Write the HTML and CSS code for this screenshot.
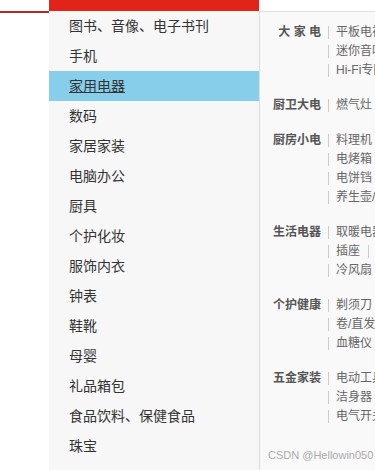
FILE: index.html
```html
<!DOCTYPE html>
<html>
  <head>
    <meta charset="utf-8" />
    <meta name="viewport" content="width=device-width,initial-scale=1.0" />
    <title>商品分类</title>
    <link rel="stylesheet" href="styles.css">
  </head>
  <body>
    <div id="page">
      <div class="bar">
        <div class="bar-gap"></div>
        <div class="bar-title"></div>
      </div>
      <div id="main">
        <div class="gutter"></div>
        <ul id="cats">
          <li>图书、音像、电子书刊</li>
          <li>手机</li>
          <li class="on"><a href="#">家用电器</a></li>
          <li>数码</li>
          <li>家居家装</li>
          <li>电脑办公</li>
          <li>厨具</li>
          <li>个护化妆</li>
          <li>服饰内衣</li>
          <li>钟表</li>
          <li>鞋靴</li>
          <li>母婴</li>
          <li>礼品箱包</li>
          <li>食品饮料、保健食品</li>
          <li>珠宝</li>
        </ul>
        <div id="panel">
          <dl class="group">
            <dt>大 家 电</dt>
            <dd>
              <div class="row"><span>平板电视</span><span>空调</span><span>冰箱</span><span>洗衣机</span></div>
              <div class="row"><span>迷你音响</span><span>烟机/灶具</span><span>热水器</span></div>
              <div class="row"><span>Hi-Fi专区</span><span>家庭影院</span></div>
            </dd>
          </dl>
          <dl class="group">
            <dt>厨卫大电</dt>
            <dd>
              <div class="row"><span>燃气灶</span><span>油烟机</span><span>消毒柜</span></div>
            </dd>
          </dl>
          <dl class="group">
            <dt>厨房小电</dt>
            <dd>
              <div class="row"><span>料理机</span><span>榨汁机</span><span>电饭煲</span></div>
              <div class="row"><span>电烤箱</span><span>微波炉</span></div>
              <div class="row"><span>电饼铛</span><span>豆浆机</span></div>
              <div class="row"><span>养生壶/花茶壶</span><span>电水壶</span></div>
            </dd>
          </dl>
          <dl class="group">
            <dt>生活电器</dt>
            <dd>
              <div class="row"><span>取暖电器</span><span>净化器</span></div>
              <div class="row"><span>插座</span><span>加湿器</span><span>扫地机器人</span></div>
              <div class="row"><span>冷风扇</span><span>吸尘器</span></div>
            </dd>
          </dl>
          <dl class="group">
            <dt>个护健康</dt>
            <dd>
              <div class="row"><span>剃须刀</span><span>电吹风</span></div>
              <div class="row"><span>卷/直发器</span><span>按摩椅</span></div>
              <div class="row"><span>血糖仪</span><span>血压计</span></div>
            </dd>
          </dl>
          <dl class="group">
            <dt>五金家装</dt>
            <dd>
              <div class="row"><span>电动工具</span><span>手动工具</span></div>
              <div class="row"><span>洁身器</span><span>水槽</span></div>
              <div class="row"><span>电气开关</span><span>插座</span></div>
            </dd>
          </dl>
        </div>
      </div>
      <div class="mark">CSDN @Hellowin050</div>
    </div>
  </body>
</html>
```

FILE: styles.css
```css
body {
  margin: 0;
  overflow: hidden;
  background: #fff;
  font-family: "Liberation Sans", "Noto Sans CJK SC", sans-serif;
}

#page {
  position: relative;
  width: 375px;
  height: 470px;
  overflow: hidden;
  display: flex;
  flex-direction: column;
}

.bar {
  display: flex;
  height: 11px;
  flex-shrink: 0;
}
.bar-gap {
  width: 49px;
}
.bar-title {
  width: 210px;
  background: #e2231a;
}

#main {
  display: flex;
  flex: 1;
}
.gutter {
  width: 49px;
  flex-shrink: 0;
  border-top: 2px solid #b8252a;
  box-sizing: border-box;
}

#cats {
  list-style: none;
  margin: 0;
  padding: 0;
  width: 210px;
  flex-shrink: 0;
  background: #f7f7f7;
}
#cats > li {
  height: 30px;
  line-height: 30px;
  padding-left: 20px;
  font-size: 14px;
  color: #333;
  white-space: nowrap;
}
#cats > li.on {
  background: #87ceeb;
}
#cats > li.on a {
  color: #333;
  text-decoration: underline;
}

#panel {
  width: 600px;
  flex-shrink: 0;
  background: #f9f9f9;
  border-top: 1px solid #e0e0e0;
  border-left: 1px solid #ddd;
  padding: 14px 0 0 13px;
}

.group {
  display: flex;
  margin: 0 0 16px;
}
.group dt {
  width: 48px;
  padding-right: 7px;
  text-align: right;
  font-size: 12px;
  line-height: 13px;
  font-weight: bold;
  color: #555;
  white-space: nowrap;
}
.group dd {
  margin: 0;
}
.row {
  display: flex;
  margin-bottom: 6px;
  font-size: 12px;
  line-height: 13px;
  color: #666;
  white-space: nowrap;
}
.row span {
  border-left: 1px solid #ccc;
  padding: 0 8px 0 7px;
}

.mark {
  position: absolute;
  left: 268px;
  top: 449px;
  font-size: 11px;
  color: #aaa;
  white-space: nowrap;
}
```
